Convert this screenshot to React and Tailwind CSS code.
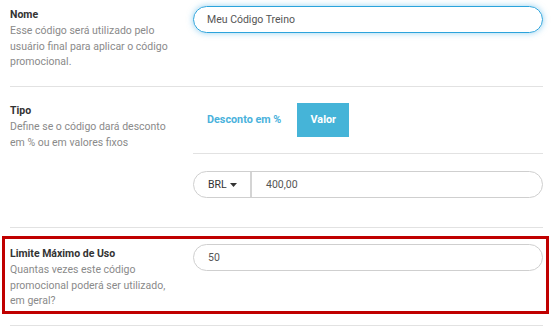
export default function App() {
  return (
    <div className="w-[553px] h-[328px] overflow-hidden bg-white font-['Roboto',sans-serif] text-[10.5px] leading-[15.75px]">
      <div className="px-[10px]">
        {/* Row 1 */}
        <div className="flex items-start pt-[6px] pb-[16px] border-b border-[#e2e2e2]">
          <div className="w-[183px] shrink-0 pt-[1px] pr-[20px]">
            <div className="font-bold text-[#333]">Nome</div>
            <div className="text-[#8a8a8a]">Esse código será utilizado pelo usuário final para aplicar o código promocional.</div>
          </div>
          <div className="flex-1">
            <div className="h-[27px] rounded-full border border-[#2ba3dc] shadow-[0_0_6px_rgba(60,170,225,0.55)] flex items-center pl-[13px] text-[#555]">
              Meu Código Treino
            </div>
          </div>
        </div>

        {/* Row 2 */}
        <div className="flex items-start pt-[16px] pb-[29px] border-b border-[#e2e2e2]">
          <div className="w-[183px] shrink-0 pr-[20px]">
            <div className="font-bold text-[#333]">Tipo</div>
            <div className="text-[#8a8a8a]">Define se o código dará desconto em % ou em valores fixos</div>
          </div>
          <div className="flex-1">
            <div className="flex items-center pb-[16px] border-b border-[#e2e2e2]">
              <div className="h-[34px] flex items-center pl-[14px] pr-[16px] font-bold text-[10.8px] text-[#4ab2dc]">Desconto em %</div>
              <div className="h-[34px] w-[52px] flex items-center justify-center bg-[#45b4d8] font-bold text-[10.8px] text-white">Valor</div>
            </div>
            <div className="mt-[17px] h-[27px] rounded-full border border-[#cfcfcf] flex items-stretch text-[#333]">
              <div className="w-[58px] flex items-center pl-[14px] gap-[3px] border-r-2 border-[#d4d4d4]">
                <span>BRL</span>
                <svg width="7" height="4" viewBox="0 0 7 4"><path d="M0 0h7L3.5 4z" fill="#333" /></svg>
              </div>
              <div className="flex items-center pl-[14px] text-[#555]">400,00</div>
            </div>
          </div>
        </div>

        {/* Row 3 */}
        <div className="pt-[8px] pb-[11px] border-b border-[#e2e2e2]">
          <div className="-ml-[8px] -mr-[6px] border-[3px] border-[#c00000] flex items-start pl-[5px] pr-[3px] pt-[5px] pb-[2px]">
            <div className="w-[183px] shrink-0 pt-[2px] pr-[20px]">
              <div className="font-bold text-[#333]">Limite Máximo de Uso</div>
              <div className="text-[#8a8a8a]">Quantas vezes este código promocional poderá ser utilizado, em geral?</div>
            </div>
            <div className="flex-1">
              <div className="h-[27px] rounded-full border border-[#cfcfcf] flex items-center pl-[14px] text-[#555]">50</div>
            </div>
          </div>
        </div>
      </div>
    </div>
  );
}
